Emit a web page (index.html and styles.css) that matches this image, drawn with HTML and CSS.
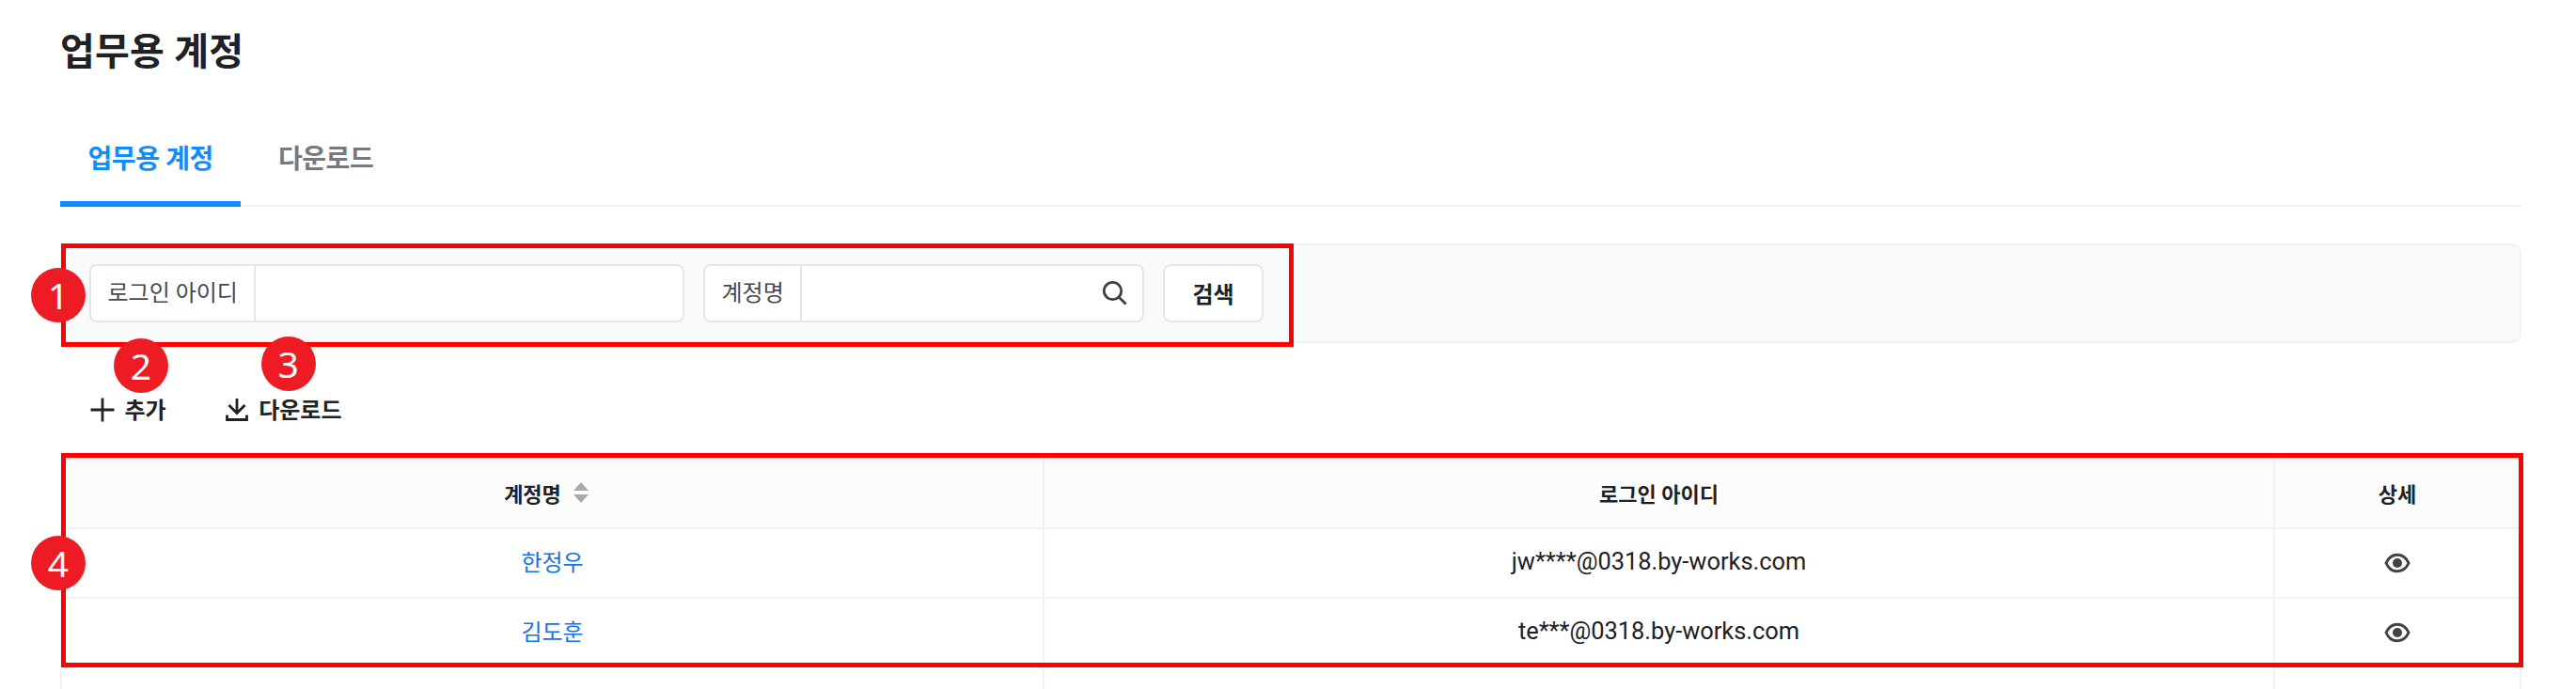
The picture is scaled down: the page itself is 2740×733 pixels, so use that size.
FILE: index.html
```html
<!DOCTYPE html>
<html lang="ko">
  <head>
    <meta charset="UTF-8" />
    <meta name="viewport" content="width=device-width, initial-scale=1.0" />
    <title>업무용 계정</title>
    <link rel="stylesheet" href="styles.css">
  </head>
  <body>
    <main class="page">
      <h1 class="page-title">업무용 계정</h1>

      <nav class="tabs">
        <a href="#" class="tab active">업무용 계정</a>
        <a href="#" class="tab">다운로드</a>
      </nav>

      <form class="search-bar">
        <div class="field field-id">
          <label for="login-id">로그인 아이디</label>
          <input type="text" id="login-id" />
        </div>
        <div class="field field-name">
          <label for="account-name">계정명</label>
          <input type="text" id="account-name" />
          <svg class="icon-search" width="28" height="28" viewBox="0 0 28 28">
            <circle cx="11.5" cy="11.5" r="9.2" />
            <path d="M18 18l7.6 7.6" />
          </svg>
        </div>
        <button type="button" class="btn-search">검색</button>
        <span class="outline outline-search"></span>
        <span class="badge badge-1">1</span>
      </form>

      <div class="actions">
        <button type="button" class="btn-action">
          <svg width="26" height="26" viewBox="0 0 26 26">
            <path d="M13 0.5v25M0.5 13h25" />
          </svg>
          <span>추가</span>
          <span class="badge badge-2">2</span>
        </button>
        <button type="button" class="btn-action">
          <svg width="26" height="26" viewBox="0 0 26 26">
            <path d="M13 1v15M4.5 8l8.5 8.5L21.5 8M2.5 18.5v5h21v-5" />
          </svg>
          <span>다운로드</span>
          <span class="badge badge-3">3</span>
        </button>
      </div>

      <div class="table-wrap">
        <table class="account-table">
          <colgroup>
            <col class="col-name" />
            <col class="col-id" />
            <col class="col-detail" />
          </colgroup>
          <thead>
            <tr>
              <th>
                <span class="sortable">
                  계정명
                  <svg width="16" height="22" viewBox="0 0 16 22">
                    <path d="M8 0l8 9H0zM0 13h16l-8 9z" />
                  </svg>
                </span>
              </th>
              <th>로그인 아이디</th>
              <th>상세</th>
            </tr>
          </thead>
          <tbody>
            <tr>
              <td class="name"><a href="#">한정우</a></td>
              <td class="login-id">jw****@0318.by-works.com</td>
              <td>
                <svg class="icon-eye" width="28" height="22" viewBox="0 0 28 22">
                  <path d="M2 11C4.5 5.5 8.5 2.3 14 2.3S23.5 5.5 26 11C23.5 16.5 19.5 19.7 14 19.7S4.5 16.5 2 11z" />
                  <circle cx="14" cy="11" r="5" />
                </svg>
              </td>
            </tr>
            <tr>
              <td class="name"><a href="#">김도훈</a></td>
              <td class="login-id">te***@0318.by-works.com</td>
              <td>
                <svg class="icon-eye" width="28" height="22" viewBox="0 0 28 22">
                  <path d="M2 11C4.5 5.5 8.5 2.3 14 2.3S23.5 5.5 26 11C23.5 16.5 19.5 19.7 14 19.7S4.5 16.5 2 11z" />
                  <circle cx="14" cy="11" r="5" />
                </svg>
              </td>
            </tr>
            <tr class="row-empty">
              <td></td>
              <td></td>
              <td></td>
            </tr>
          </tbody>
        </table>
        <span class="outline outline-table"></span>
        <span class="badge badge-4">4</span>
      </div>
    </main>
  </body>
</html>
```
FILE: styles.css
```css
* {
  margin: 0;
  padding: 0;
  box-sizing: border-box;
}

body {
  font-family: Roboto, "Noto Sans CJK KR", sans-serif;
  font-size: 24px;
  color: #202124;
  background-color: #fff;
}

a {
  text-decoration: none;
}

svg {
  display: block;
  flex: none;
}

.page {
  width: 2682px;
  padding-left: 64px;
}

.page-title {
  padding-top: 26px;
  font-size: 40px;
  font-weight: bold;
  line-height: 60px;
  letter-spacing: 0.2px;
}

/* Tabs */
.tabs {
  display: flex;
  gap: 10px;
  height: 84px;
  margin-top: 50px;
  border-bottom: 2px solid #f0f1f8;
}

.tab {
  height: 84px;
  padding: 14px 29.5px 0;
  font-size: 28px;
  font-weight: bold;
  line-height: 40px;
  letter-spacing: -0.4px;
  color: #767a7f;
}

.tab.active {
  color: #108cff;
  border-bottom: 6px solid #108cff;
}

/* Search */
.search-bar {
  position: relative;
  display: flex;
  gap: 20px;
  height: 106px;
  margin-top: 39px;
  padding: 20px 29px;
  background-color: #f9fafc;
  border: 2px solid #f0f2fa;
  border-radius: 10px;
}

.field {
  display: flex;
  height: 62px;
  background-color: #fff;
  border: 2px solid #e5e6ea;
  border-radius: 8px;
}

.field-id {
  width: 633px;
}

.field-name {
  width: 469px;
}

.field label {
  flex: none;
  padding: 0 17.5px;
  color: #47484e;
  line-height: 58px;
  border-right: 2px solid #e5e6ea;
}

.field input {
  flex: 1;
  min-width: 0;
  background: none;
  border: none;
}

.icon-search {
  margin: 15px 15px 0 0;
  fill: none;
  stroke: #3f4046;
  stroke-width: 2.8;
}

.btn-search {
  width: 107px;
  height: 62px;
  padding-bottom: 2px;
  font: inherit;
  font-weight: bold;
  color: #202124;
  background-color: #fff;
  border: 2px solid #e5e6ea;
  border-radius: 8px;
}

/* Actions */
.actions {
  display: flex;
  gap: 62px;
  margin-top: 53px;
  padding-left: 32px;
}

.btn-action {
  position: relative;
  display: flex;
  align-items: center;
  gap: 10.5px;
  height: 36px;
  font: inherit;
  font-weight: bold;
  line-height: 36px;
  color: #202124;
  background: none;
  border: none;
}

.btn-action span:not(.badge) {
  padding-top: 2px;
}

.btn-action svg {
  fill: none;
  stroke: #202124;
  stroke-width: 2.8;
}

/* Table */
.table-wrap {
  position: relative;
  margin-top: 32px;
}

.account-table {
  width: 2618px;
  table-layout: fixed;
  border-collapse: separate;
  border-spacing: 0;
  border: 2px solid #f1f2f9;
  border-right: none;
  border-bottom: none;
  border-radius: 8px 8px 0 0;
}

.col-name {
  width: 1045px;
}

.col-id {
  width: 1309px;
}

.col-detail {
  width: 262px;
}

.account-table th,
.account-table td {
  height: 74px;
  text-align: center;
  vertical-align: middle;
  border-right: 2px solid #f1f2f9;
  border-bottom: 2px solid #f1f2f9;
}

.account-table th {
  height: 75px;
  padding-bottom: 2px;
  font-size: 22px;
  font-weight: bold;
  background-color: #fcfcfd;
}

.account-table .name {
  padding-bottom: 6px;
}

.account-table .name a {
  color: #1473e6;
}

.account-table .login-id {
  padding-bottom: 4px;
  font-size: 25.4px;
}

.account-table .row-empty td {
  height: 22px;
  border-bottom: none;
}

.sortable {
  display: flex;
  justify-content: center;
  align-items: center;
  gap: 13px;
  padding-right: 13px;
}

.sortable svg {
  fill: #a9a9a9;
}

.icon-eye {
  margin: 0 auto;
  fill: #424248;
}

.icon-eye path {
  fill: none;
  stroke: #424248;
  stroke-width: 3;
}

/* Callouts */
.outline {
  position: absolute;
  border: 5px solid #f00;
  pointer-events: none;
}

.outline-search {
  top: -2px;
  left: -1px;
  width: 1311px;
  height: 110px;
}

.outline-table {
  top: -4px;
  left: 1px;
  width: 2619px;
  height: 228px;
}

.badge {
  position: absolute;
  z-index: 1;
  width: 58px;
  height: 58px;
  font-family: "Noto Sans", sans-serif;
  font-size: 39px;
  font-weight: normal;
  line-height: 58px;
  text-align: center;
  color: #fff;
  background-color: #ed1c24;
  border-radius: 50%;
}

.badge-1 {
  top: 24px;
  left: -33px;
}

.badge-2 {
  top: -58px;
  left: 25px;
}

.badge-3 {
  top: -60px;
  left: 39px;
}

.badge-4 {
  top: 84px;
  left: -31px;
}
```
